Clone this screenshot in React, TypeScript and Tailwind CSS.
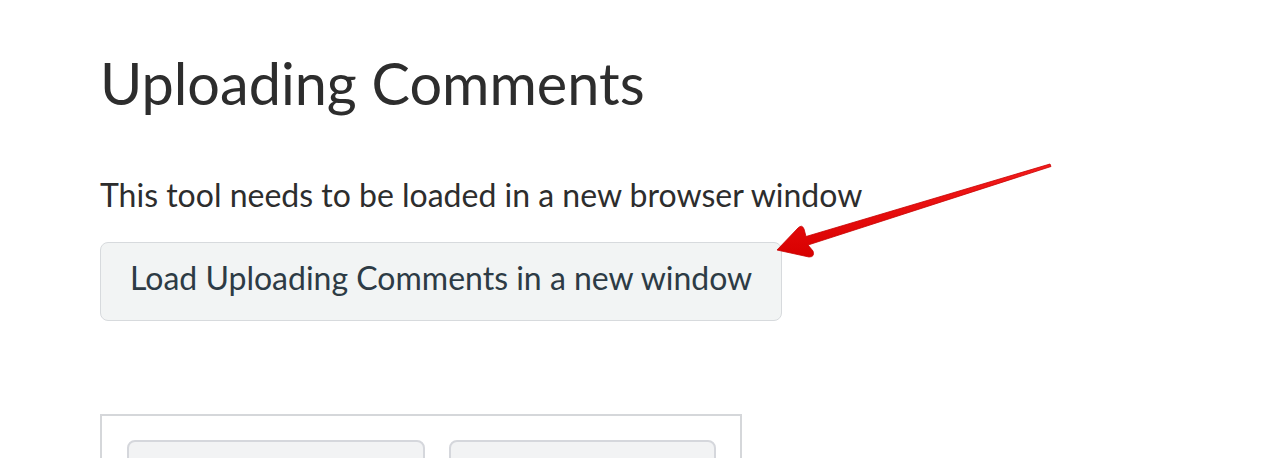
import { FC } from "react"

const Arrow: FC = () => (
  <svg
    className="absolute left-0 top-0 pointer-events-none"
    width="1272"
    height="458"
    viewBox="0 0 1272 458"
  >
    <defs>
      <linearGradient id="arrowFill" x1="0" y1="0" x2="0" y2="1">
        <stop offset="0" stopColor="#f51c1c" />
        <stop offset="1" stopColor="#d80000" />
      </linearGradient>
    </defs>
    <path
      d="M777 250 L798 228 Q802 224 804 229 L806 236.5 L1050 164 L1051 166.5 L808 245 L813 251 Q815 257 809 257 Z"
      fill="url(#arrowFill)"
      stroke="#c80000"
      strokeWidth="0.8"
      strokeLinejoin="round"
    />
  </svg>
)

const App: FC = () => {
  return (
    <div
      className="relative h-[458px] w-[1272px] overflow-hidden bg-white"
      style={{ fontFamily: "Lato, 'Liberation Sans', sans-serif" }}
    >
      <div className="pl-[100px] pt-[47px]">
        <h1 className="text-[57.6px] leading-[72px] font-normal text-[#2d2d2d]">
          Uploading Comments
        </h1>
        <p className="mt-[52px] text-[32px] leading-[48px] text-[#2d2d2d]">
          This tool needs to be loaded in a new browser window
        </p>
        <button className="mt-[23px] h-[79px] rounded-[8px] border border-[#d7dadd] bg-[#f2f4f4] px-[29px] pb-[7px] text-[32px] leading-[48px] text-[#2d3b45]">
          Load Uploading Comments in a new window
        </button>
        <div className="mt-[93px] w-[642px] border-2 border-[#d5d7da] pl-[25px] pt-[24px]">
          <div className="flex gap-[24px]">
            <div className="h-[60px] w-[298px] shrink-0 rounded-[8px] border-2 border-[#d5d7dc] bg-[#f2f3f4]" />
            <div className="h-[60px] w-[267px] shrink-0 rounded-[8px] border-2 border-[#d5d7dc] bg-[#f2f3f4]" />
          </div>
        </div>
      </div>
      <Arrow />
    </div>
  )
}

export default App
